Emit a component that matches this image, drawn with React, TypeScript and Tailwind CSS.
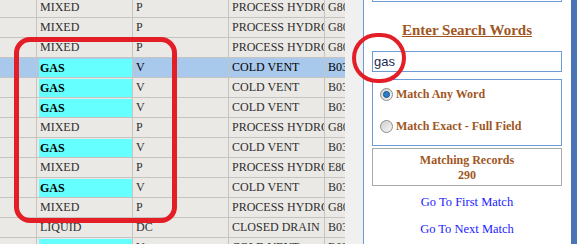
const rows = [
	{ type: "MIXED", code: "P", service: "PROCESS HYDROCARBON", tag: "G80" },
	{ type: "MIXED", code: "P", service: "PROCESS HYDROCARBON", tag: "G80" },
	{ type: "MIXED", code: "P", service: "PROCESS HYDROCARBON", tag: "G80" },
	{ type: "GAS", code: "V", service: "COLD VENT", tag: "B03", selected: true },
	{ type: "GAS", code: "V", service: "COLD VENT", tag: "B03" },
	{ type: "GAS", code: "V", service: "COLD VENT", tag: "B03" },
	{ type: "MIXED", code: "P", service: "PROCESS HYDROCARBON", tag: "G80" },
	{ type: "GAS", code: "V", service: "COLD VENT", tag: "B03" },
	{ type: "MIXED", code: "P", service: "PROCESS HYDROCARBON", tag: "E80" },
	{ type: "GAS", code: "V", service: "COLD VENT", tag: "B03" },
	{ type: "MIXED", code: "P", service: "PROCESS HYDROCARBON", tag: "G80" },
	{ type: "LIQUID", code: "DC", service: "CLOSED DRAIN", tag: "B03" },
	{ type: "GAS", code: "V", service: "COLD VENT", tag: "B03" },
];

function Radio({ checked, label }: { checked?: boolean; label: string }) {
	return (
		<div className="flex h-[16px] items-center gap-[3px] pl-[7px]">
			<span className="flex h-[13px] w-[13px] items-center justify-center rounded-full border border-[#8c8c8c] bg-gradient-to-br from-[#cfcfcf] to-[#f7f7f7]">
				{checked && (
					<span className="h-[7px] w-[7px] rounded-full border border-[#1d4f87] bg-[#2d7fcb]" />
				)}
			</span>
			<span className="text-[12px] leading-[16px] font-bold text-[#a0561e]">{label}</span>
		</div>
	);
}

export default function App() {
	return (
		<div className="relative flex h-[244px] w-[577px] overflow-hidden font-['Liberation_Serif','Times_New_Roman',serif]">
			<div className="w-[363px] bg-[#f0f0f0]">
				<div className="-mt-[2px] w-[345px] bg-[#ebe9e5]">
					{rows.map((r, i) => {
						const gas = r.type === "GAS";
						return (
							<div
								key={i}
								className={`flex h-[20px] border-b border-[#c6c4c1] text-[12px] leading-[19px] whitespace-nowrap ${
									r.selected ? "bg-[#a9c9ec] text-black" : "text-[#2e2e2e]"
								}`}
							>
								<div className="w-[37px] border-r border-[#c6c4c1]" />
								<div className="w-[96px] overflow-hidden border-r border-[#c6c4c1]">
									{gas ? (
										<div className="mt-px ml-[2px] h-[18px] bg-[#66ffff] pl-px leading-[18px] font-bold text-black">
											{r.type}
										</div>
									) : (
										<div className="pl-[3px]">{r.type}</div>
									)}
								</div>
								<div className="w-[96px] overflow-hidden border-r border-[#c6c4c1] pl-[3px]">{r.code}</div>
								<div className="w-[96px] overflow-hidden border-r border-[#c6c4c1] pl-[3px]">{r.service}</div>
								<div className="flex-1 overflow-hidden pl-[3px]">{r.tag}</div>
							</div>
						);
					})}
				</div>
			</div>

			<div className="flex flex-1 bg-white">
				<div className="flex flex-col border-l border-[#6d9bd3] pr-[9px] pl-[8px]">
					<div className="h-[2px] w-[190px] border-x border-b border-[#6d9bd3]" />
					<h2 className="mt-[20px] text-center text-[15px] leading-[17px] font-bold text-[#a0561e] underline">
						Enter Search Words
					</h2>
					<div className="mt-[12px] h-[21px] w-[190px] border border-[#6d9bd3] pl-px font-['Liberation_Sans',Arial,sans-serif] text-[13px] leading-[19px] text-[#1a2c50]">
						gas
					</div>
					<div className="mt-[7px] flex w-[190px] flex-col gap-[16px] border border-[#6d9bd3] pt-[6px] pb-[11px]">
						<Radio checked label="Match Any Word" />
						<Radio label="Match Exact - Full Field" />
					</div>
					<div className="mt-[2px] w-[190px] border border-[#a9a9a9] pt-[4px] pb-[2px] text-center text-[12px] leading-[15px] font-bold text-[#a0561e]">
						<div>Matching Records</div>
						<div>290</div>
					</div>
					<a className="mt-[8px] text-center text-[12.5px] leading-[16px] text-[#2222ff]">Go To First Match</a>
					<a className="mt-[11px] text-center text-[12.5px] leading-[16px] text-[#2222ff]">Go To Next Match</a>
				</div>
				<div className="flex-1 bg-[#4a74b6]" />
			</div>

			<div className="absolute top-[37px] left-[14px] h-[186px] w-[163px] rounded-[16px] border-[5px] border-[#e41e26]" />
			<div className="absolute top-[33px] left-[352px] h-[50px] w-[54px] rounded-full border-[4px] border-[#e41e26]" />
		</div>
	);
}
